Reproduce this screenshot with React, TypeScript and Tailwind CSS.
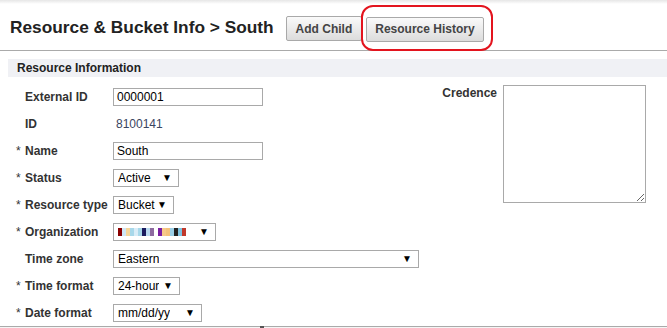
import React from 'react'

const Caret = () => <span className="text-[10px] leading-none text-black">▼</span>

function Select({ width, children }: { width: string; children: React.ReactNode }) {
  return (
    <div className={`${width} h-[18px] border border-[#a9a9a9] bg-white flex items-center justify-between pl-[4px] pr-[6px] text-[12px] text-black`}>
      <span className="truncate">{children}</span>
      <Caret />
    </div>
  )
}

function TextBox({ value }: { value: string }) {
  return (
    <div className="w-[150px] h-[18px] border border-[#a9a9a9] bg-white flex items-center px-[3px] text-[12px] text-black">
      {value}
    </div>
  )
}

// pixelated org name, blurred in the original
const orgPixels = ['#8b0000', '#cfe6f5', '#f5d69a', '#a8d8ea', '#d9ecf7', '#a8d8ea', '#1b1b5e', '#b9d9f0', '#8d6a9f', '#ffffff', '#7b1fa2', '#f7c98a', '#f5c27a', '#9bd0e8', '#222', '#7ec3e0', '#c0392b']

function Row({ req, label, children }: { req?: boolean; label: string; children: React.ReactNode }) {
  return (
    <div className="flex items-center h-[27px]">
      <span className="w-[10px] pl-[1px] text-[12px] text-[#333]">{req ? '*' : ''}</span>
      <span className="w-[88px] text-[12px] font-bold text-[#333]">{label}</span>
      {children}
    </div>
  )
}

export default function App() {
  return (
    <div className="w-[667px] h-[328px] bg-white overflow-hidden relative" style={{ fontFamily: '"Liberation Sans", Arial, sans-serif' }}>
      <div className="h-[4px] bg-gradient-to-b from-[#e6e6e6] to-white" />

      {/* Title bar */}
      <div className="h-[47px] flex items-start border-b border-[#aaaaaa]">
        <h1 className="ml-[10px] mt-[15px] text-[17.3px] font-bold text-[#222] leading-none">Resource &amp; Bucket Info &gt; South</h1>
        <div className="ml-[12px] mt-[12px] flex gap-[4px]">
          <button className="h-[25px] px-[9px] border border-[#a9a9a9] rounded-[2px] bg-gradient-to-b from-[#fafafa] to-[#dcdcdc] text-[12px] font-bold text-[#444]">Add Child</button>
          <div className="relative">
            <button className="h-[25px] px-[8px] border border-[#a9a9a9] rounded-[2px] bg-gradient-to-b from-[#fafafa] to-[#dcdcdc] text-[12px] font-bold text-[#444]">Resource History</button>
            <div className="absolute left-[-5px] top-[-11px] w-[132px] h-[46px] border-2 border-[#e3141e] rounded-[12px] pointer-events-none" />
          </div>
        </div>
      </div>

      {/* Section */}
      <div className="ml-[8px] mt-[8px]">
        <div className="h-[18px] bg-[#f0f1f5] flex items-center pl-[9px] text-[12px] font-bold text-[#222]">Resource Information</div>

        <div className="flex">
          <div className="pl-[7px] pt-[6px]">
            <Row label="External ID"><TextBox value="0000001" /></Row>
            <Row label="ID"><span className="pl-[3px] text-[12px] text-[#3a4560]">8100141</span></Row>
            <Row req label="Name"><TextBox value="South" /></Row>
            <Row req label="Status"><Select width="w-[66px]">Active</Select></Row>
            <Row req label="Resource type"><Select width="w-[61px]">Bucket</Select></Row>
            <Row req label="Organization">
              <div className="w-[103px] h-[18px] border border-[#a9a9a9] bg-white flex items-center justify-between pl-[4px] pr-[6px]">
                <div className="flex h-[8px]">
                  {orgPixels.map((c, i) => (
                    <span key={i} className="w-[4px] h-[8px]" style={{ background: c }} />
                  ))}
                </div>
                <Caret />
              </div>
            </Row>
            <Row label="Time zone"><Select width="w-[306px]">Eastern</Select></Row>
            <Row req label="Time format"><Select width="w-[67px]">24-hour</Select></Row>
            <Row req label="Date format"><Select width="w-[89px]">mm/dd/yy</Select></Row>
          </div>

          <div className="ml-auto mr-[21px] mt-[8px] flex items-start gap-[6px]">
            <span className="text-[12px] font-bold text-[#333] -mt-[1px]">Credence</span>
            <textarea readOnly className="w-[143px] h-[118px] border border-[#a9a9a9] bg-white resize-y" />
          </div>
        </div>
      </div>

      <div className="absolute left-0 right-0 bottom-0 h-[2px] border-t border-[#aaaaaa] bg-[#f5f5f5]">
        <div className="absolute left-[260px] top-[-1px] w-[4px] h-[2px] bg-[#555]" />
      </div>
    </div>
  )
}
